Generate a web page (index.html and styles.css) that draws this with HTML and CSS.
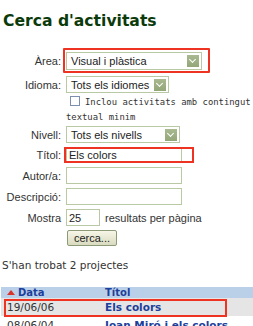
FILE: index.html
```html
<!DOCTYPE html>
<html lang="ca">
<head>
<meta charset="utf-8">
<title>Cerca d'activitats</title>
<link rel="stylesheet" href="styles.css">
</head>
<body>
<h1 class="title">Cerca d'activitats</h1>
<div class="form">
  <div class="row row-area">
    <span class="label">Àrea:</span>
    <div class="select w-area"><span class="sel-text">Visual i plàstica</span><span class="arrow"></span></div>
    <span class="mark mark-area"></span>
  </div>
  <div class="row row-idioma">
    <span class="label">Idioma:</span>
    <div class="select w-idioma"><span class="sel-text">Tots els idiomes</span><span class="arrow"></span></div>
  </div>
  <div class="check">
    <span class="box"></span>Inclou activitats amb contingut textual minim
  </div>
  <div class="row row-nivell">
    <span class="label">Nivell:</span>
    <div class="select w-nivell"><span class="sel-text">Tots els nivells</span><span class="arrow"></span></div>
  </div>
  <div class="row row-titol">
    <span class="label">Títol:</span>
    <div class="input w-text">Els colors</div>
    <span class="mark mark-titol"></span>
  </div>
  <div class="row row-std">
    <span class="label">Autor/a:</span>
    <div class="input w-text"></div>
  </div>
  <div class="row row-std">
    <span class="label">Descripció:</span>
    <div class="input w-text"></div>
  </div>
  <div class="row row-std">
    <span class="label">Mostra</span>
    <div class="input w-num">25</div>
    <span class="after">resultats per pàgina</span>
  </div>
  <div class="row row-btn">
    <span class="label"></span>
    <span class="button">cerca...</span>
  </div>
</div>
<p class="found">S'han trobat 2 projectes</p>
<div class="table">
  <div class="trow thead">
    <span class="c1"><span class="tri"></span>Data</span>
    <span class="c2">Títol</span>
  </div>
  <div class="trow tsel">
    <span class="c1">19/06/06</span>
    <span class="c2 link">Els colors</span>
    <span class="mark mark-row"></span>
  </div>
  <div class="trow">
    <span class="c1">08/06/04</span>
    <span class="c2 link">Joan Miró i els colors</span>
  </div>
</div>
</body>
</html>
```
FILE: styles.css
```css
html, body {
  margin: 0;
  padding: 0;
  background: #fff;
  overflow: hidden;
}
body {
  width: 253px;
  height: 326px;
  font-family: "Liberation Sans", Arial, sans-serif;
  font-size: 11px;
  color: #333;
}
.title {
  margin: 12px 0 0 3px;
  font-family: "DejaVu Sans", Verdana, sans-serif;
  font-weight: bold;
  font-size: 15.6px;
  line-height: 19px;
  color: #0b3a0b;
}
.form {
  margin-top: 21px;
  display: flex;
  flex-direction: column;
}
.row {
  position: relative;
  display: flex;
  align-items: center;
  gap: 5px;
}
.label {
  width: 61px;
  flex: none;
  text-align: right;
}
.select, .input {
  box-sizing: border-box;
  border: 1px solid #b9c9a3;
  background: #fff;
  color: #222;
  display: flex;
  align-items: center;
}
.select { height: 17px; padding: 0 2px 0 4px; }
.sel-text { flex: 1; }
.arrow {
  width: 12px;
  height: 12px;
  flex: none;
  background: linear-gradient(#a9b990, #93a778);
  position: relative;
}
.arrow::after {
  content: "";
  position: absolute;
  left: 3px;
  top: 2px;
  width: 4px;
  height: 4px;
  border-right: 1.5px solid #fff;
  border-bottom: 1.5px solid #fff;
  transform: rotate(45deg);
}
.row-area { height: 18px; }
.w-area { width: 136px; height: 18px; }
.row-idioma { margin-top: 6px; height: 17px; }
.w-idioma { width: 103px; }
.w-nivell { width: 114px; }
.check {
  margin: 2px 0 0 66px;
  width: 192px;
  font-family: "DejaVu Sans Mono", monospace;
  font-size: 8.9px;
  line-height: 15px;
  color: #333;
}
.box {
  display: inline-block;
  box-sizing: border-box;
  width: 10px;
  height: 10px;
  border: 1px solid #7d8fae;
  background: #fff;
  margin: 0 5px 0 4px;
  vertical-align: -1px;
}
.row-nivell { margin-top: 1px; height: 17px; }
.row-titol { margin-top: 4px; height: 16px; }
.input { height: 17px; padding: 0 2px; }
.row-titol .input { height: 16px; }
.w-text { width: 116px; }
.w-num { width: 34px; }
.row-std { margin-top: 4px; height: 17px; }
.row-std:nth-of-type(5) { margin-top: 5px; }
.after { margin-left: 0; }
.row-btn { margin-top: 4px; height: 16px; }
.button {
  box-sizing: border-box;
  width: 50px;
  height: 16px;
  margin-left: 1px;
  border: 1px solid #8c9a78;
  border-radius: 2px;
  background: linear-gradient(#f7f6e8, #d9dbbf);
  text-align: center;
  line-height: 14px;
  color: #222;
}
.mark {
  position: absolute;
  box-sizing: border-box;
  border: 2px solid #ee3322;
  pointer-events: none;
}
.mark-area { left: 63px; top: -4px; width: 147px; height: 25px; border-radius: 1px; }
.mark-titol { left: 64px; top: 0; width: 130px; height: 16px; }
.found {
  margin: 13px 0 0 2px;
  font-family: "DejaVu Sans", Verdana, sans-serif;
  font-size: 10.5px;
  line-height: 13px;
  color: #333;
}
.table {
  margin: 15px 0 0 1px;
  font-family: "DejaVu Sans", Verdana, sans-serif;
  font-size: 10.5px;
}
.trow {
  position: relative;
  display: flex;
  height: 18px;
  align-items: center;
}
.c1 { width: 98px; padding-left: 6px; flex: none; }
.c2 { flex: 1; }
.thead {
  height: 11px;
  background: #bad0e9;
  color: #1d3f9c;
  font-weight: bold;
  font-size: 10px;
  line-height: 11px;
}
.tri {
  display: inline-block;
  width: 0;
  height: 0;
  border-left: 4px solid transparent;
  border-right: 4px solid transparent;
  border-bottom: 5px solid #d8342a;
  margin: 0 3px 0 0;
  vertical-align: 1px;
}
.tsel { background: #e5e5e5; }
.link { color: #1d3f9c; font-weight: bold; }
.mark-row { left: 3px; top: 1px; width: 223px; height: 18px; }
```
